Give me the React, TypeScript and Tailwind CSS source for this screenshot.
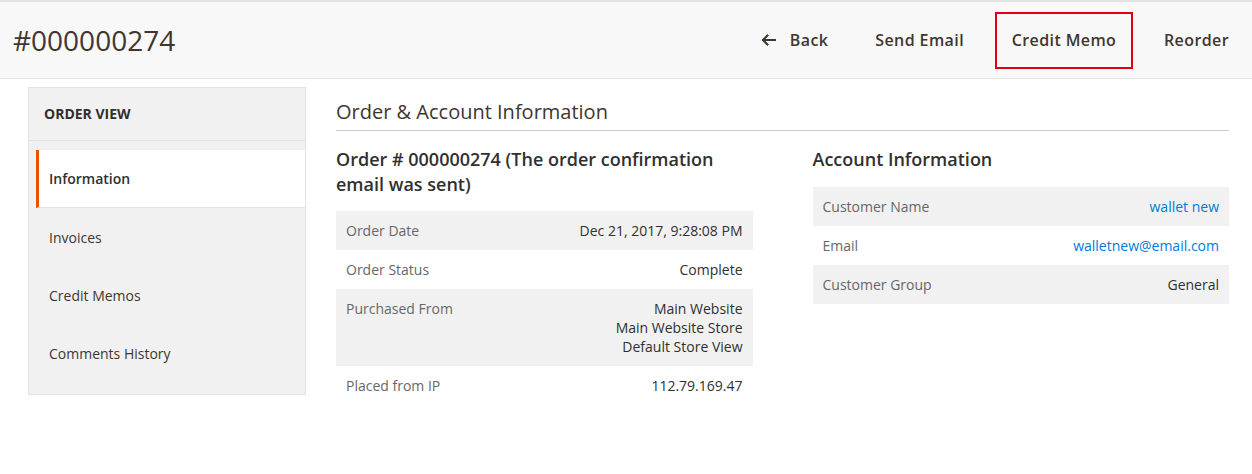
import React from "react";

const font = { fontFamily: '"Open Sans", "Liberation Sans", sans-serif' };

function Row({ label, children, shaded }: { label: string; children: React.ReactNode; shaded?: boolean }) {
  return (
    <div className={`flex justify-between px-[10px] py-[10px] text-[14px] leading-[19px] ${shaded ? "bg-[#f1f1f1]" : "bg-white"}`}>
      <div className="text-[#676767]">{label}</div>
      <div className="text-right text-[#303030]">{children}</div>
    </div>
  );
}

export default function App() {
  return (
    <div style={font} className="w-[1252px] h-[474px] bg-white overflow-hidden text-[#41362f]">
      {/* Header */}
      <div className="h-[79px] border-t-2 border-b border-[#e3e3e3] bg-[#f8f8f8] flex items-center justify-between">
        <h1 className="pl-[13px] text-[28px] leading-[36px] font-normal text-[#41362f]">#000000274</h1>
        <div className="flex items-center gap-[15px] pr-[7px] text-[16px] font-semibold tracking-[0.4px] text-[#41362f]">
          <button className="h-[57px] px-4 flex items-center gap-[14px]">
            <svg width="15" height="12" viewBox="0 0 15 12" fill="none" stroke="#41362f" strokeWidth="2" strokeLinecap="square">
              <path d="M14 6H2" />
              <path d="M6.5 1.5L2 6l4.5 4.5" />
            </svg>
            <span>Back</span>
          </button>
          <button className="h-[57px] px-4">Send Email</button>
          <button className="h-[57px] w-[138px] border-2 border-[#e3000f] flex items-center justify-center">Credit Memo</button>
          <button className="h-[57px] px-4">Reorder</button>
        </div>
      </div>

      {/* Body */}
      <div className="flex items-start pt-[8px] pl-[28px] pr-[23px]">
        {/* Sidebar */}
        <div className="w-[278px] shrink-0 bg-[#f1f1f1] border border-[#e3e3e3] pb-[12px]">
          <div className="h-[53px] flex items-center pl-[15px] pb-[1px] border-b border-[#e3e3e3] text-[14px] font-bold text-[#303030]">ORDER VIEW</div>
          <div className="pt-[9px] pl-[7px]">
            <div className="h-[58px] flex items-center bg-white border-l-[3px] border-[#eb5202] pl-[10px] text-[14px] font-semibold text-[#303030] border-b border-b-[#e3e3e3]">
              Information
            </div>
            <div className="h-[58px] flex items-center pl-[13px] text-[14px] text-[#41362f]">Invoices</div>
            <div className="h-[58px] flex items-center pl-[13px] text-[14px] text-[#41362f]">Credit Memos</div>
            <div className="h-[58px] flex items-center pl-[13px] text-[14px] text-[#41362f]">Comments History</div>
          </div>
        </div>

        {/* Main */}
        <div className="ml-[30px] flex-1 pt-[13px]">
          <div className="text-[20px] leading-[24px] pb-[6px] border-b border-[#cccccc] text-[#41362f]">Order &amp; Account Information</div>
          <div className="grid grid-cols-2 gap-[60px] pt-[16px]">
            <div>
              <div className="text-[18px] leading-[25px] font-semibold text-[#303030] mb-[14px]">
                Order # 000000274 (The order confirmation email was sent)
              </div>
              <div>
                <Row label="Order Date" shaded>Dec 21, 2017, 9:28:08 PM</Row>
                <Row label="Order Status">Complete</Row>
                <Row label="Purchased From" shaded>
                  Main Website
                  <br />
                  Main Website Store
                  <br />
                  Default Store View
                </Row>
                <Row label="Placed from IP">112.79.169.47</Row>
              </div>
            </div>
            <div>
              <div className="text-[18px] leading-[25px] font-semibold text-[#303030] mb-[15px]">Account Information</div>
              <div>
                <Row label="Customer Name" shaded>
                  <span className="text-[#007bdb]">wallet new</span>
                </Row>
                <Row label="Email">
                  <span className="text-[#007bdb]">walletnew@email.com</span>
                </Row>
                <Row label="Customer Group" shaded>General</Row>
              </div>
            </div>
          </div>
        </div>
      </div>
    </div>
  );
}
